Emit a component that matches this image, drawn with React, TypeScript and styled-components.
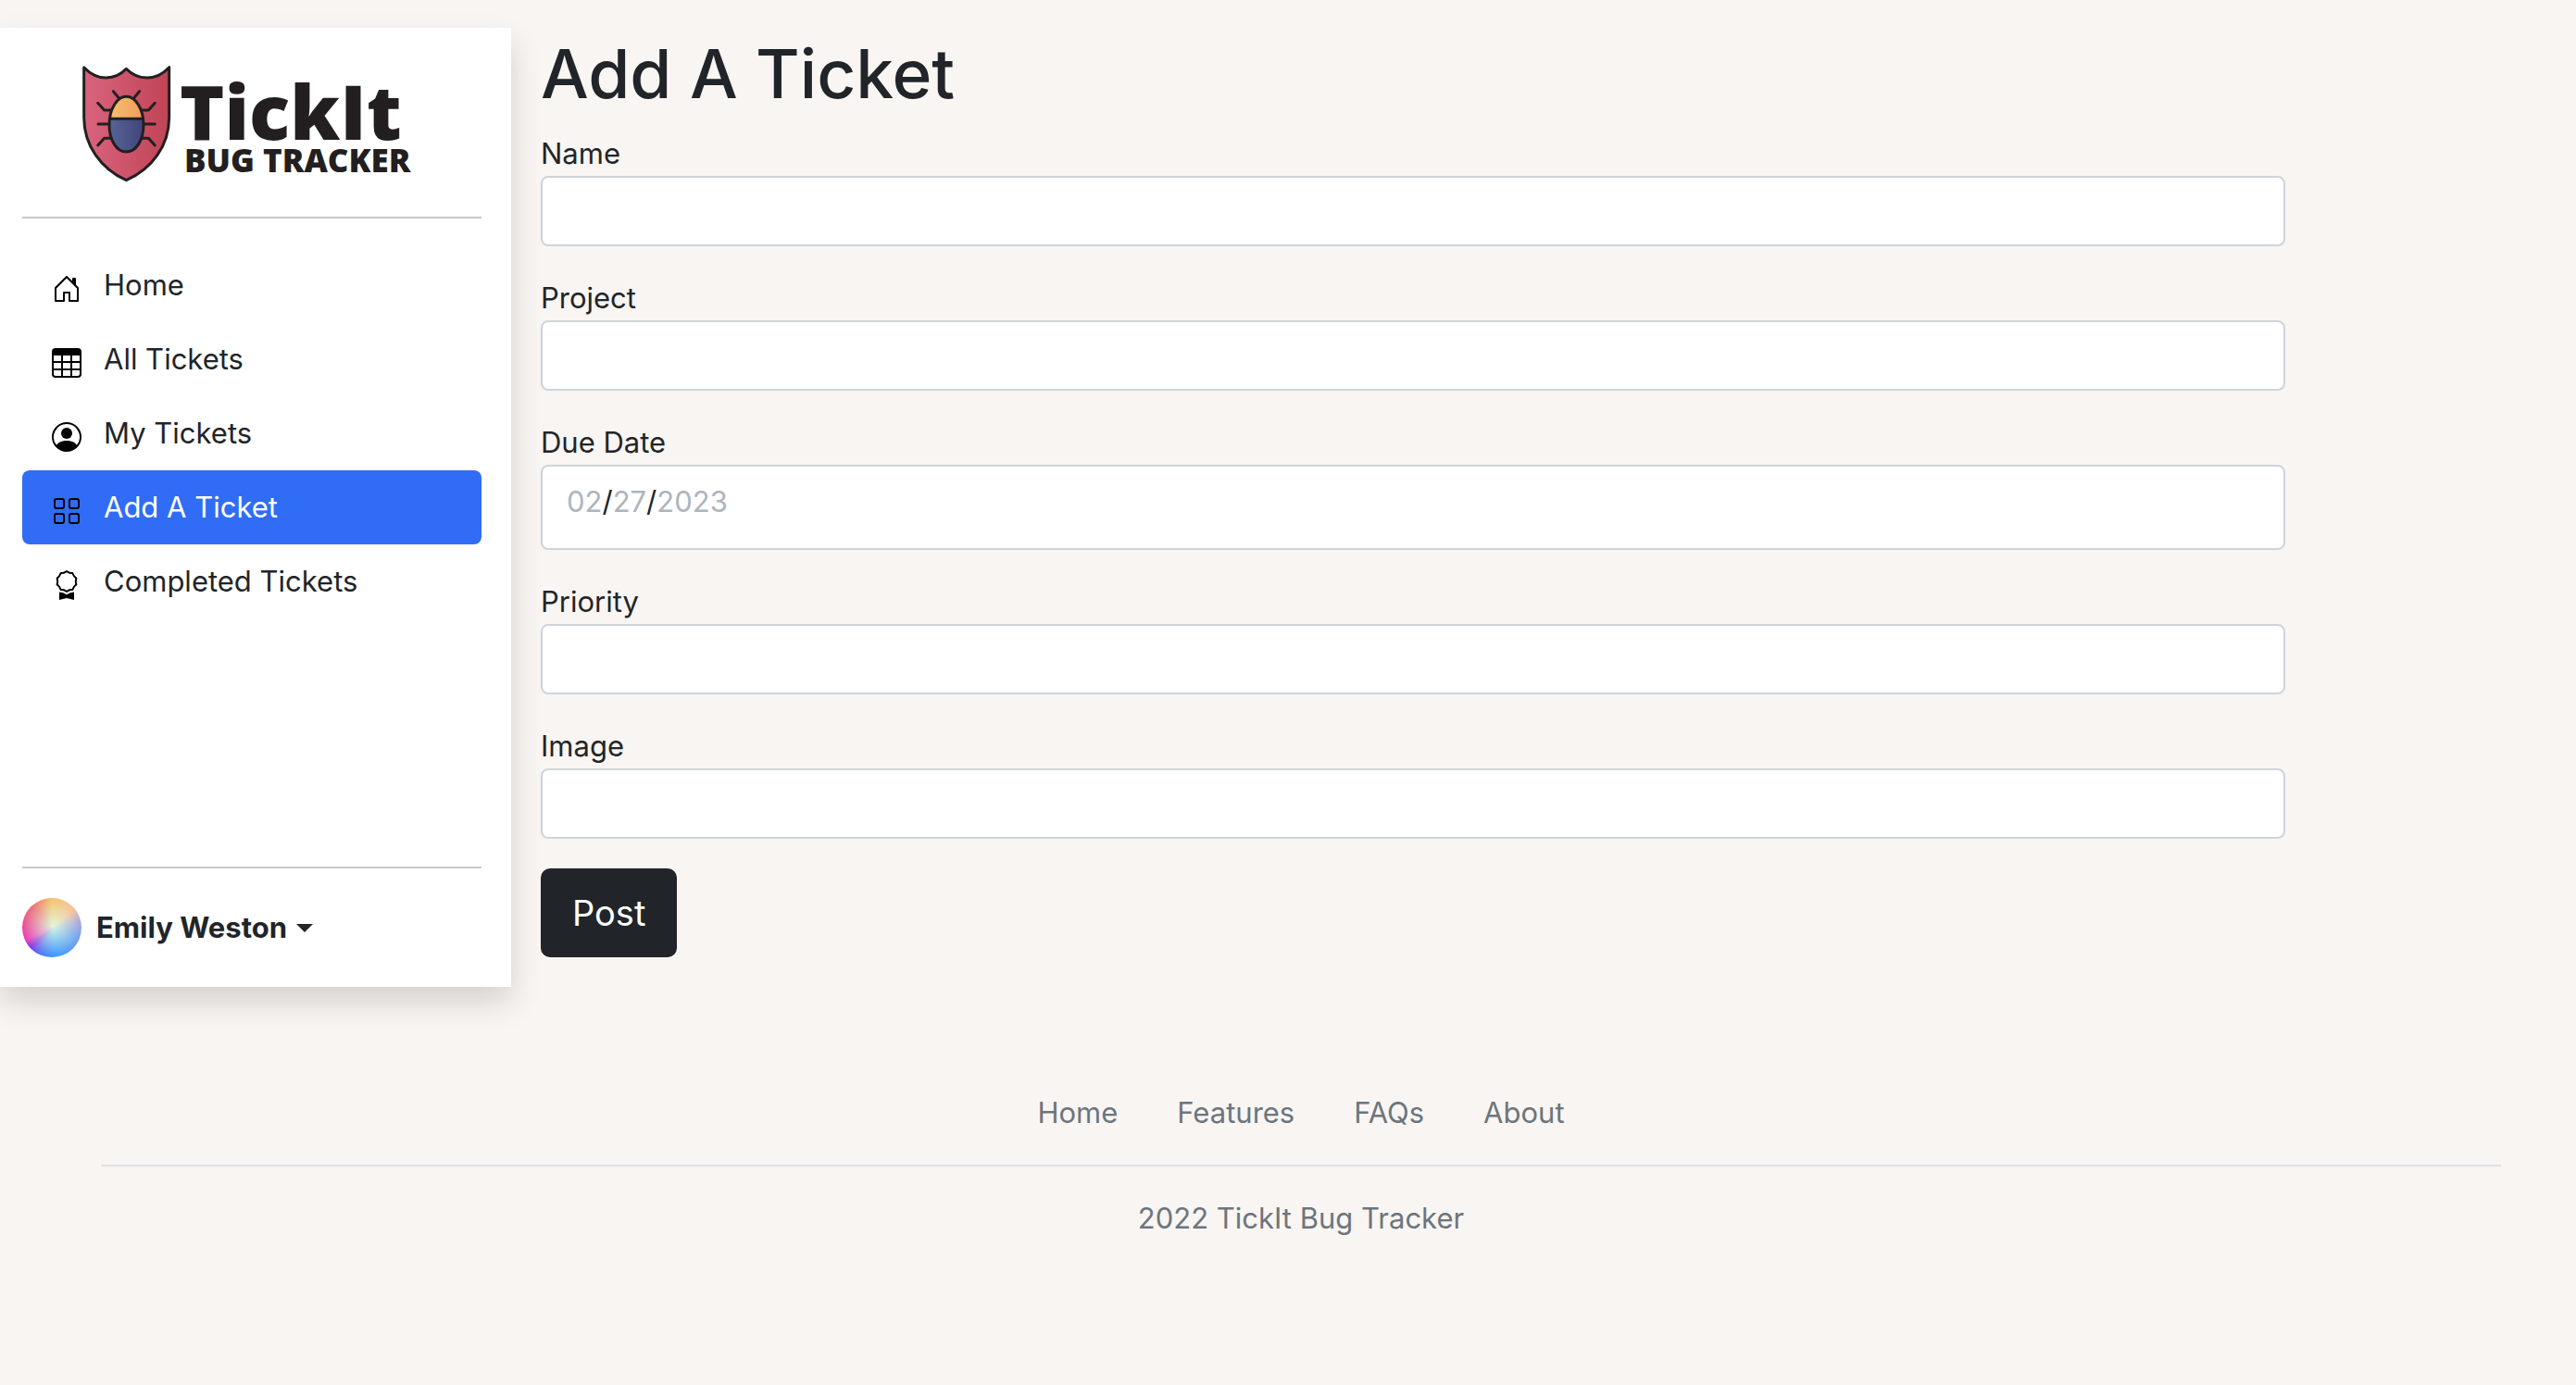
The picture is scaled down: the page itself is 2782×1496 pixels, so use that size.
import React from "react";
import styled, { createGlobalStyle } from "styled-components";
import { BsAward, BsGrid, BsPersonCircle, BsTable } from "react-icons/bs";

const GlobalStyle = createGlobalStyle`
  *, *::before, *::after { box-sizing: border-box; }
  body {
    margin: 0;
    background: #f9f5f2;
    color: #212529;
    font-family: Inter, "Liberation Sans", sans-serif;
    font-size: 31px;
    line-height: 48px;
  }
`;

const Page = styled.div`
  display: flex;
  padding-top: 30px;
`;

const Sidebar = styled.aside`
  display: flex;
  flex-direction: column;
  flex: 0 0 552px;
  padding: 32px 32px 32px 24px;
  background: #fff;
  box-shadow: 0 16px 32px rgba(0, 0, 0, 0.15);
`;

const LogoLink = styled.a`
  display: block;
  height: 172px;
`;

const Divider = styled.hr`
  width: 100%;
  height: 2px;
  margin: 0 0 32px;
  border: 0;
  background: #c8c8c9;
`;

const Nav = styled.nav`
  flex: 1;
`;

const NavList = styled.ul`
  margin: 0;
  padding: 0;
  list-style: none;
`;

const NavLink = styled.a<{ $active?: boolean }>`
  display: flex;
  align-items: center;
  gap: 24px;
  padding: 16px 32px;
  border-radius: 8px;
  color: ${(p) => (p.$active ? "#fff" : "#212529")};
  background: ${(p) => (p.$active ? "#306cf5" : "transparent")};
  text-decoration: none;

  svg {
    flex: none;
    width: 32px;
    height: 32px;
    margin-top: 8px;
    color: #000;
  }
`;

const UserMenu = styled.button`
  display: flex;
  align-items: center;
  align-self: flex-start;
  padding: 0;
  border: 0;
  background: none;
  color: #212529;
  font: inherit;
  font-weight: 700;
  line-height: 48px;
`;

const Avatar = styled.span`
  width: 64px;
  height: 64px;
  margin-right: 16px;
  border-radius: 50%;
  background:
    radial-gradient(circle at 50% 48%, rgba(225, 255, 225, 0.9) 0, rgba(240, 255, 220, 0) 70%),
    conic-gradient(
      #f5c065 0deg,
      #f8bd94 50deg,
      #a5a5dc 80deg,
      #6fa0f2 110deg,
      #3f9bff 170deg,
      #4b78f8 205deg,
      #8a35e0 228deg,
      #ea3bb8 245deg,
      #ea4b90 280deg,
      #ee6c70 320deg,
      #f5c065 360deg
    );
`;

const Caret = styled.span`
  margin-left: 10px;
  border-top: 9px solid currentColor;
  border-left: 9px solid transparent;
  border-right: 9px solid transparent;
`;

const Main = styled.main`
  flex: 1;
  min-width: 0;
  padding: 0 32px 32px;
`;

const Title = styled.h1`
  margin: 0 0 14px;
  padding-top: 2px;
  font-size: 73px;
  font-weight: 500;
  line-height: 96px;
`;

const Form = styled.form`
  max-width: 1884px;
`;

const Field = styled.div`
  display: flex;
  flex-direction: column;
  margin-bottom: 32px;
`;

const TextInput = styled.input`
  width: 100%;
  padding: 12px 24px;
  border: 2px solid #ced4da;
  border-radius: 8px;
  background: #fff;
  color: #212529;
  font: inherit;
  line-height: 48px;
  height: 76px;
`;

const DateInput = styled(TextInput)`
  height: 92px;
  padding: 14px 26px 26px;
  font-variant-numeric: normal;

  &::-webkit-calendar-picker-indicator { display: none; }
  &::-webkit-datetime-edit { padding: 0; }
  &::-webkit-datetime-edit-month-field,
  &::-webkit-datetime-edit-day-field,
  &::-webkit-datetime-edit-year-field {
    padding: 0;
    color: #adb5bd;
  }
`;

const PostButton = styled.button`
  display: block;
  padding: 16px 32px;
  border: 2px solid #212529;
  border-radius: 10px;
  background: #212529;
  color: #fff;
  font: inherit;
  font-size: 38px;
  line-height: 60px;
`;

const FooterArea = styled.div`
  padding: 112px 28px 0 56px;
`;

const Footer = styled.footer`
  max-width: 2592px;
  margin: 0 auto;
  color: #6c757d;
  text-align: center;
`;

const FooterLinks = styled.ul`
  display: flex;
  justify-content: center;
  gap: 64px;
  margin: 0 0 32px;
  padding: 0 0 32px;
  border-bottom: 2px solid #dee2e6;
  list-style: none;

  a {
    color: inherit;
    text-decoration: none;
  }
`;

const Copyright = styled.p`
  margin: 0;
`;

function HomeIcon() {
  return (
    <svg viewBox="0 0 16 16" fill="currentColor" aria-hidden="true">
      <path d="M8.354 1.146a.5.5 0 0 0-.708 0l-6 6A.5.5 0 0 0 1.5 7.5v7a.5.5 0 0 0 .5.5h4.5a.5.5 0 0 0 .5-.5v-4h2v4a.5.5 0 0 0 .5.5H14a.5.5 0 0 0 .5-.5v-7a.5.5 0 0 0-.146-.354L13 5.793V2.5a.5.5 0 0 0-.5-.5h-1a.5.5 0 0 0-.5.5v1.293L8.354 1.146zM2.5 14V7.707l5.5-5.5 5.5 5.5V14H10v-4a.5.5 0 0 0-.5-.5h-3a.5.5 0 0 0-.5.5v4H2.5z" />
    </svg>
  );
}

function Logo() {
  return (
    <svg width="496" height="172" viewBox="24 62 496 172" role="img" aria-label="TickIt Bug Tracker">
      <defs>
        <linearGradient id="shield" x1="0" x2="1" y1="0" y2="0">
          <stop offset="0" stopColor="#d9647f" />
          <stop offset="1" stopColor="#c04455" />
        </linearGradient>
        <linearGradient id="head" x1="0" x2="1" y1="0" y2="0">
          <stop offset="0" stopColor="#f6be6c" />
          <stop offset="1" stopColor="#f09e5c" />
        </linearGradient>
        <linearGradient id="body" x1="0" x2="1" y1="0" y2="0">
          <stop offset="0" stopColor="#586495" />
          <stop offset="1" stopColor="#40457c" />
        </linearGradient>
      </defs>
      <g
        transform="translate(80 60) scale(0.3333)"
        stroke="#231f20"
        strokeWidth="9"
        strokeLinecap="round"
        strokeLinejoin="round"
        fill="none"
      >
        <path
          d="M32 38Q64 72 104 72Q142 72 169 43Q197 72 236 72Q276 72 308 38V200C308 292 252 368 169 404C88 368 32 292 32 200Z"
          fill="url(#shield)"
        />
        <path d="M127 116L146 139M212 116L193 139M77 154L98 177H119M262 154L241 177H220M78 222H112M262 222H227M77 291L98 268H117M262 291L241 268H222" />
        <path d="M118 205C121 162 143 133 169 133C195 133 218 162 221 205Z" fill="url(#head)" stroke="none" />
        <path d="M117 205C108 263 133 312 169 312C206 312 231 263 222 205Z" fill="url(#body)" stroke="none" />
        <path d="M169 133C139 133 114 174 114 224C114 276 139 312 169 312C200 312 225 276 225 224C225 174 200 133 169 133ZM118 205H221" />
      </g>
      <g fill="#231f20" fontFamily="'Open Sans', 'Noto Sans', sans-serif">
        <text x="194" y="151" fontSize="82" fontWeight="800">TickIt</text>
        <text x="199" y="186" fontSize="35" fontWeight="800">BUG TRACKER</text>
      </g>
    </svg>
  );
}

const navItems = [
  { label: "Home", icon: <HomeIcon /> },
  { label: "All Tickets", icon: <BsTable /> },
  { label: "My Tickets", icon: <BsPersonCircle /> },
  { label: "Add A Ticket", icon: <BsGrid />, active: true },
  { label: "Completed Tickets", icon: <BsAward /> },
];

const footerItems = ["Home", "Features", "FAQs", "About"];

export default function App() {
  return (
    <>
      <GlobalStyle />
      <Page>
        <Sidebar>
          <LogoLink href="#">
            <Logo />
          </LogoLink>
          <Divider />
          <Nav>
            <NavList>
              {navItems.map((item) => (
                <li key={item.label}>
                  <NavLink href="#" $active={item.active} aria-current={item.active ? "page" : undefined}>
                    {item.icon}
                    {item.label}
                  </NavLink>
                </li>
              ))}
            </NavList>
          </Nav>
          <Divider />
          <UserMenu type="button" aria-haspopup="menu">
            <Avatar />
            Emily Weston
            <Caret />
          </UserMenu>
        </Sidebar>
        <Main>
          <Title>Add A Ticket</Title>
          <Form onSubmit={(e) => e.preventDefault()}>
            <Field>
              <label htmlFor="name">Name</label>
              <TextInput id="name" type="text" />
            </Field>
            <Field>
              <label htmlFor="project">Project</label>
              <TextInput id="project" type="text" />
            </Field>
            <Field>
              <label htmlFor="due">Due Date</label>
              <DateInput id="due" type="date" defaultValue="2023-02-27" />
            </Field>
            <Field>
              <label htmlFor="priority">Priority</label>
              <TextInput id="priority" type="text" />
            </Field>
            <Field>
              <label htmlFor="image">Image</label>
              <TextInput id="image" type="text" />
            </Field>
            <PostButton type="submit">Post</PostButton>
          </Form>
        </Main>
      </Page>
      <FooterArea>
        <Footer>
          <FooterLinks>
            {footerItems.map((item) => (
              <li key={item}>
                <a href="#">{item}</a>
              </li>
            ))}
          </FooterLinks>
          <Copyright>2022 TickIt Bug Tracker</Copyright>
        </Footer>
      </FooterArea>
    </>
  );
}
